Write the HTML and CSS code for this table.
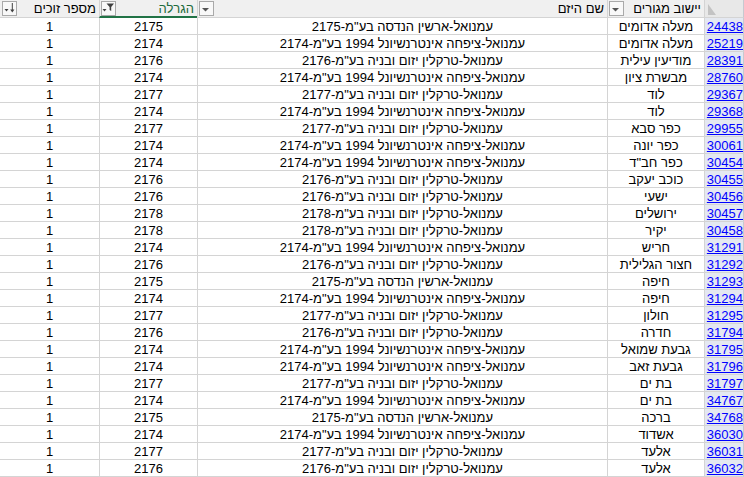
FILE: index.html
```html
<!DOCTYPE html>
<html lang="he">
<head>
<meta charset="utf-8">
<title>גיליון</title>
<link rel="stylesheet" href="styles.css">
</head>
<body>
<div class="sheet" dir="rtl">
  <div class="row head">
    <div class="c id corner"><svg class="tri" width="8" height="11" viewBox="0 0 8 11"><polygon points="0,0 0,11 8,11" fill="#c3c3c3"/></svg></div>
    <div class="c city"><span class="ht">יישוב מגורים</span><span class="fb"><svg width="13" height="13" viewBox="0 0 13 13"><polygon points="2,6 9,6 5.5,9.5" fill="#555"/></svg></span></div>
    <div class="c name"><span class="ht">שם היזם</span><span class="fb"><svg width="13" height="13" viewBox="0 0 13 13"><polygon points="2,6 9,6 5.5,9.5" fill="#555"/></svg></span></div>
    <div class="c lot active"><span class="ht">הגרלה</span><span class="fb"><svg width="13" height="13" viewBox="0 0 13 13"><polygon points="4.5,1.5 12,1.5 9.2,5 9.2,9 7.6,8 7.6,5" fill="#404040"/><polygon points="0.5,7 4.5,7 2.5,9.5" fill="#404040"/></svg></span></div>
    <div class="c win"><span class="ht">מספר זוכים</span><span class="fb"><svg width="13" height="13" viewBox="0 0 13 13"><polygon points="1.5,7 5.5,7 3.5,9.5" fill="#404040"/><rect x="8.8" y="1" width="1" height="7.5" fill="#404040"/><polygon points="7.2,7.5 11.4,7.5 9.3,10.5" fill="#404040"/></svg></span></div>
  </div>
  <div class="row"><div class="c id"><a>24438</a></div><div class="c city">מעלה אדומים</div><div class="c name">עמנואל-ארשין הנדסה בע"מ-2175</div><div class="c lot">2175</div><div class="c win">1</div></div>
  <div class="row"><div class="c id"><a>25219</a></div><div class="c city">מעלה אדומים</div><div class="c name">עמנואל-ציפחה אינטרנשיונל 1994 בע"מ-2174</div><div class="c lot">2174</div><div class="c win">1</div></div>
  <div class="row"><div class="c id"><a>28391</a></div><div class="c city">מודיעין עילית</div><div class="c name">עמנואל-טרקלין יזום ובניה בע"מ-2176</div><div class="c lot">2176</div><div class="c win">1</div></div>
  <div class="row"><div class="c id"><a>28760</a></div><div class="c city">מבשרת ציון</div><div class="c name">עמנואל-ציפחה אינטרנשיונל 1994 בע"מ-2174</div><div class="c lot">2174</div><div class="c win">1</div></div>
  <div class="row"><div class="c id"><a>29367</a></div><div class="c city">לוד</div><div class="c name">עמנואל-טרקלין יזום ובניה בע"מ-2177</div><div class="c lot">2177</div><div class="c win">1</div></div>
  <div class="row"><div class="c id"><a>29368</a></div><div class="c city">לוד</div><div class="c name">עמנואל-ציפחה אינטרנשיונל 1994 בע"מ-2174</div><div class="c lot">2174</div><div class="c win">1</div></div>
  <div class="row"><div class="c id"><a>29955</a></div><div class="c city">כפר סבא</div><div class="c name">עמנואל-טרקלין יזום ובניה בע"מ-2177</div><div class="c lot">2177</div><div class="c win">1</div></div>
  <div class="row"><div class="c id"><a>30061</a></div><div class="c city">כפר יונה</div><div class="c name">עמנואל-ציפחה אינטרנשיונל 1994 בע"מ-2174</div><div class="c lot">2174</div><div class="c win">1</div></div>
  <div class="row"><div class="c id"><a>30454</a></div><div class="c city">כפר חב"ד</div><div class="c name">עמנואל-ציפחה אינטרנשיונל 1994 בע"מ-2174</div><div class="c lot">2174</div><div class="c win">1</div></div>
  <div class="row"><div class="c id"><a>30455</a></div><div class="c city">כוכב יעקב</div><div class="c name">עמנואל-טרקלין יזום ובניה בע"מ-2176</div><div class="c lot">2176</div><div class="c win">1</div></div>
  <div class="row"><div class="c id"><a>30456</a></div><div class="c city">ישעי</div><div class="c name">עמנואל-טרקלין יזום ובניה בע"מ-2176</div><div class="c lot">2176</div><div class="c win">1</div></div>
  <div class="row"><div class="c id"><a>30457</a></div><div class="c city">ירושלים</div><div class="c name">עמנואל-טרקלין יזום ובניה בע"מ-2178</div><div class="c lot">2178</div><div class="c win">1</div></div>
  <div class="row"><div class="c id"><a>30458</a></div><div class="c city">יקיר</div><div class="c name">עמנואל-טרקלין יזום ובניה בע"מ-2178</div><div class="c lot">2178</div><div class="c win">1</div></div>
  <div class="row"><div class="c id"><a>31291</a></div><div class="c city">חריש</div><div class="c name">עמנואל-ציפחה אינטרנשיונל 1994 בע"מ-2174</div><div class="c lot">2174</div><div class="c win">1</div></div>
  <div class="row"><div class="c id"><a>31292</a></div><div class="c city">חצור הגלילית</div><div class="c name">עמנואל-טרקלין יזום ובניה בע"מ-2176</div><div class="c lot">2176</div><div class="c win">1</div></div>
  <div class="row"><div class="c id"><a>31293</a></div><div class="c city">חיפה</div><div class="c name">עמנואל-ארשין הנדסה בע"מ-2175</div><div class="c lot">2175</div><div class="c win">1</div></div>
  <div class="row"><div class="c id"><a>31294</a></div><div class="c city">חיפה</div><div class="c name">עמנואל-ציפחה אינטרנשיונל 1994 בע"מ-2174</div><div class="c lot">2174</div><div class="c win">1</div></div>
  <div class="row"><div class="c id"><a>31295</a></div><div class="c city">חולון</div><div class="c name">עמנואל-טרקלין יזום ובניה בע"מ-2177</div><div class="c lot">2177</div><div class="c win">1</div></div>
  <div class="row"><div class="c id"><a>31794</a></div><div class="c city">חדרה</div><div class="c name">עמנואל-טרקלין יזום ובניה בע"מ-2176</div><div class="c lot">2176</div><div class="c win">1</div></div>
  <div class="row"><div class="c id"><a>31795</a></div><div class="c city">גבעת שמואל</div><div class="c name">עמנואל-ציפחה אינטרנשיונל 1994 בע"מ-2174</div><div class="c lot">2174</div><div class="c win">1</div></div>
  <div class="row"><div class="c id"><a>31796</a></div><div class="c city">גבעת זאב</div><div class="c name">עמנואל-ציפחה אינטרנשיונל 1994 בע"מ-2174</div><div class="c lot">2174</div><div class="c win">1</div></div>
  <div class="row"><div class="c id"><a>31797</a></div><div class="c city">בת ים</div><div class="c name">עמנואל-טרקלין יזום ובניה בע"מ-2177</div><div class="c lot">2177</div><div class="c win">1</div></div>
  <div class="row"><div class="c id"><a>34767</a></div><div class="c city">בת ים</div><div class="c name">עמנואל-ציפחה אינטרנשיונל 1994 בע"מ-2174</div><div class="c lot">2174</div><div class="c win">1</div></div>
  <div class="row"><div class="c id"><a>34768</a></div><div class="c city">ברכה</div><div class="c name">עמנואל-ארשין הנדסה בע"מ-2175</div><div class="c lot">2175</div><div class="c win">1</div></div>
  <div class="row"><div class="c id"><a>36030</a></div><div class="c city">אשדוד</div><div class="c name">עמנואל-ציפחה אינטרנשיונל 1994 בע"מ-2174</div><div class="c lot">2174</div><div class="c win">1</div></div>
  <div class="row"><div class="c id"><a>36031</a></div><div class="c city">אלעד</div><div class="c name">עמנואל-טרקלין יזום ובניה בע"מ-2177</div><div class="c lot">2177</div><div class="c win">1</div></div>
  <div class="row"><div class="c id"><a>36032</a></div><div class="c city">אלעד</div><div class="c name">עמנואל-טרקלין יזום ובניה בע"מ-2176</div><div class="c lot">2176</div><div class="c win">1</div></div>
</div>
</body>
</html>
```
FILE: styles.css
```css
* { box-sizing: border-box; }
html, body { margin: 0; padding: 0; background: #fff; }
body {
  font-family: "Liberation Sans", Arial, sans-serif;
  font-size: 13px;
  color: #000;
  width: 744px;
  height: 477px;
  overflow: hidden;
}
.sheet { width: 744px; }
.row {
  display: grid;
  grid-template-columns: 40px 97px 410px 98px 99px;
  height: 17px;
}
.c {
  height: 17px;
  border-left: 1px solid #d4d4d4;
  border-bottom: 1px solid #d4d4d4;
  line-height: 17px;
  text-align: center;
  white-space: nowrap;
  overflow: hidden;
}
.c.win { border-left: none; }
.c.id {
  text-align: right;
  background: #e4e8f1;
  border-right: 1px solid #c6c9d0;
  padding-right: 0;
}
.c.id a {
  color: #0000ff;
  text-decoration: underline;
  text-underline-offset: 1px;
}
.row.head { height: 18px; }
.head .c {
  height: 18px;
  background: #f0f0f0;
  line-height: 18px;
  display: flex;
  justify-content: space-between;
  align-items: flex-start;
  padding-right: 3px;
  padding-left: 1px;
}
.head .c.win { padding-left: 2px; }
.head .c.corner {
  justify-content: flex-end;
  padding: 4px 0 0 3px;
  background: #e8e8e8;
}
.tri { display: block; }
.ht { display: block; line-height: 17px; }
.head .c.active {
  border-bottom: 2px solid #217346;
}
.head .c.active .ht { color: #1e6b3c; }
.fb {
  display: block;
  width: 15px;
  height: 15px;
  margin-top: 1px;
  border: 1px solid #a9a9a9;
  background: #f8f8f8;
}
.fb svg { display: block; }
```
